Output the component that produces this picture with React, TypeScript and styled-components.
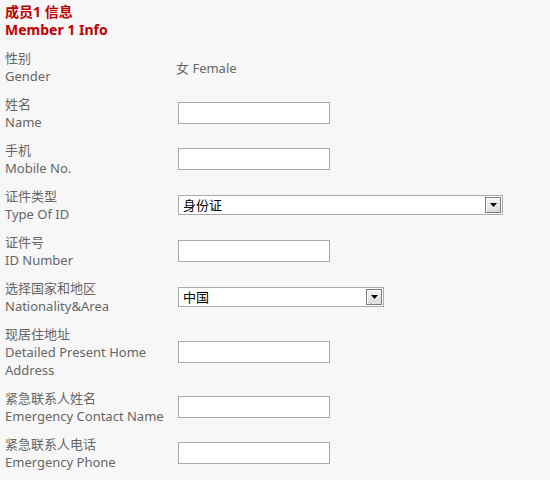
import styled, { createGlobalStyle } from 'styled-components';

const GlobalStyle = createGlobalStyle`
    html, body {
        margin: 0;
        padding: 0;
        background: #f7f7f7;
    }
    body {
        font-family: "Noto Sans", "Noto Sans CJK SC", sans-serif;
        font-size: 13px;
        color: #666;
    }
`;

type Field = {
    zh: string;
    en: string;
    kind: 'text' | 'input' | 'select';
    value?: string;
    width?: number;
};

const fields: Field[] = [
    { zh: '性别', en: 'Gender', kind: 'text', value: '女 Female' },
    { zh: '姓名', en: 'Name', kind: 'input' },
    { zh: '手机', en: 'Mobile No.', kind: 'input' },
    { zh: '证件类型', en: 'Type Of ID', kind: 'select', value: '身份证', width: 325 },
    { zh: '证件号', en: 'ID Number', kind: 'input' },
    { zh: '选择国家和地区', en: 'Nationality&Area', kind: 'select', value: '中国', width: 206 },
    { zh: '现居住地址', en: 'Detailed Present Home Address', kind: 'input' },
    { zh: '紧急联系人姓名', en: 'Emergency Contact Name', kind: 'input' },
    { zh: '紧急联系人电话', en: 'Emergency Phone', kind: 'input' },
];

const App = () => {
    return (
        <Page>
            <GlobalStyle />
            <Title>
                成员1 信息
                <br />
                Member 1 Info
            </Title>
            <Form>
                { fields.map((f) => (
                    <Row key={ f.en }>
                        <Label>
                            { f.zh }
                            <br />
                            { f.en }
                        </Label>
                        <Value>
                            { f.kind === 'text' && <Plain>{ f.value }</Plain> }
                            { f.kind === 'input' && <TextInput type='text' /> }
                            { f.kind === 'select' && (
                                <SelectBox $width={ f.width ?? 152 }>
                                    <Select defaultValue={ f.value }>
                                        <option>{ f.value }</option>
                                    </Select>
                                    <ArrowBtn>
                                        <svg width='7' height='4' viewBox='0 0 7 4'>
                                            <path d='M0 0H7L3.5 4Z' fill='#000' />
                                        </svg>
                                    </ArrowBtn>
                                </SelectBox>
                            ) }
                        </Value>
                    </Row>
                )) }
            </Form>
        </Page>
    );
};

const Page = styled.div`
    padding: 3px 0 0 5px;
`;

const Title = styled.h2`
    margin: 0 0 10px;
    font-size: 14px;
    line-height: 18px;
    font-weight: bold;
    color: #c00000;
`;

const Form = styled.div`
    display: flex;
    flex-direction: column;
    gap: 10px;
`;

const Row = styled.div`
    display: grid;
    grid-template-columns: 173px 1fr;
    align-items: center;
`;

const Label = styled.div`
    line-height: 18px;
    width: 168px;
`;

const Value = styled.div`
    display: flex;
    align-items: center;
`;

const Plain = styled.span`
    margin-left: -2px;
    color: #666;
`;

const TextInput = styled.input`
    box-sizing: border-box;
    width: 152px;
    height: 22px;
    margin: 0;
    border: 1px solid #a9a9a9;
    background: #fff;
    outline: none;
`;

const SelectBox = styled.div<{ $width: number }>`
    position: relative;
    width: ${ (p) => p.$width }px;
    height: 20px;
`;

const Select = styled.select`
    box-sizing: border-box;
    appearance: none;
    width: 100%;
    height: 100%;
    margin: 0;
    padding: 0 0 0 4px;
    border: 1px solid #a9a9a9;
    border-radius: 0;
    background: #fff;
    color: #000;
    font-family: "Noto Sans", "Noto Sans CJK SC", sans-serif;
    font-size: 13px;
    outline: none;
`;

const ArrowBtn = styled.span`
    position: absolute;
    top: 2px;
    right: 2px;
    box-sizing: border-box;
    width: 16px;
    height: 16px;
    display: flex;
    align-items: center;
    justify-content: center;
    border: 1px solid #7a7a7a;
    background: linear-gradient(#f4f4f4, #dcdcdc);
    box-shadow: inset 1px 1px 0 #fff;
    pointer-events: none;
`;

export default App;
